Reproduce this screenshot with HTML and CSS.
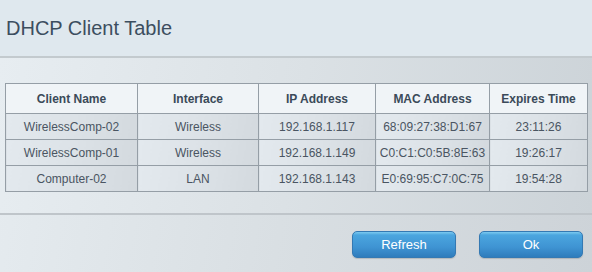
FILE: index.html
```html
<!DOCTYPE html>
<html lang="en">
<head>
    <meta charset="UTF-8">
    <title>DHCP Client Table</title>
    <link rel="stylesheet" href="styles.css">
</head>
<body>
    <div class="dialog">
        <div class="dialog-header">
            <h2>DHCP Client Table</h2>
        </div>
        <div class="dialog-body">
            <table class="client-table">
                <thead>
                    <tr>
                        <th class="col-name">Client Name</th>
                        <th class="col-iface">Interface</th>
                        <th class="col-ip">IP Address</th>
                        <th class="col-mac">MAC Address</th>
                        <th>Expires Time</th>
                    </tr>
                </thead>
                <tbody>
                    <tr>
                        <td>WirelessComp-02</td>
                        <td>Wireless</td>
                        <td>192.168.1.117</td>
                        <td>68:09:27:38:D1:67</td>
                        <td>23:11:26</td>
                    </tr>
                    <tr>
                        <td>WirelessComp-01</td>
                        <td>Wireless</td>
                        <td>192.168.1.149</td>
                        <td>C0:C1:C0:5B:8E:63</td>
                        <td>19:26:17</td>
                    </tr>
                    <tr>
                        <td>Computer-02</td>
                        <td>LAN</td>
                        <td>192.168.1.143</td>
                        <td>E0:69:95:C7:0C:75</td>
                        <td>19:54:28</td>
                    </tr>
                </tbody>
            </table>
        </div>
        <div class="dialog-footer">
            <button type="button" class="btn">Refresh</button>
            <button type="button" class="btn">Ok</button>
        </div>
    </div>
</body>
</html>
```

FILE: styles.css
```css
html, body {
    margin: 0;
    padding: 0;
}

body {
    font-family: "Liberation Sans", Arial, sans-serif;
    width: 592px;
    height: 272px;
    overflow: hidden;
    background: linear-gradient(100deg, #e6ecf0 0%, #d9dfe3 50%, #cdd3d8 100%);
}

.dialog-header {
    height: 58px;
    background-color: #dfe8ee;
    border-bottom: 2px solid #c3cace;
    box-sizing: border-box;
}

.dialog-header h2 {
    margin: 0;
    padding: 17px 0 0 6px;
    font-size: 20px;
    font-weight: normal;
    color: #3c4e5f;
}

.dialog-body {
    padding: 25px 4px 21px 5px;
    border-bottom: 2px solid #bfc5ca;
    background: linear-gradient(100deg, #e7edf1 0%, #dbe1e5 50%, #ccd3d8 100%);
}

.client-table {
    width: 583px;
    border-collapse: collapse;
    font-size: 12px;
    text-align: center;
}

.client-table th,
.client-table td {
    border: 1px solid #959ea6;
    padding: 0;
}

.client-table th {
    height: 29px;
    background-color: #f0f4f7;
    color: #3b4a59;
    font-weight: bold;
}

.client-table td {
    height: 25px;
    color: #4a5562;
    background: linear-gradient(100deg, #e3e9ee 0%, #dce2e7 50%, #d3d9de 100%);
}

.col-name {
    width: 131px;
}

.col-iface {
    width: 120px;
}

.col-ip {
    width: 116px;
}

.col-mac {
    width: 113px;
}

.dialog-footer {
    display: flex;
    justify-content: flex-end;
    gap: 23px;
    padding: 16px 9px 0 0;
}

.btn {
    width: 104px;
    height: 27px;
    border: 1px solid #3479b3;
    border-radius: 5px;
    background: linear-gradient(#7ccaf0 0%, #4ba6df 12%, #3f94d3 60%, #2f7cbc 100%);
    color: #ffffff;
    font-family: "Liberation Sans", Arial, sans-serif;
    font-size: 13px;
    padding: 0;
    cursor: pointer;
    box-shadow: 0 1px 1px rgba(0, 0, 0, 0.15);
}
```
